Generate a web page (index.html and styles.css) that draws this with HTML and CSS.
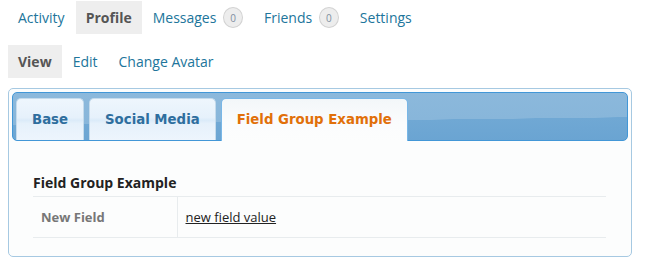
FILE: index.html
```html
<!DOCTYPE html>
<html>
<head>
<meta charset="utf-8">
<link rel="stylesheet" href="styles.css">
</head>
<body>
<nav class="nav nav-main">
  <a class="nav-item" href="#">Activity</a>
  <a class="nav-item is-current" href="#">Profile</a>
  <a class="nav-item" href="#">Messages <span class="badge">0</span></a>
  <a class="nav-item" href="#">Friends <span class="badge">0</span></a>
  <a class="nav-item" href="#">Settings</a>
</nav>
<nav class="nav nav-sub">
  <a class="nav-item is-current" href="#">View</a>
  <a class="nav-item" href="#">Edit</a>
  <a class="nav-item" href="#">Change Avatar</a>
</nav>
<div class="tabs">
  <ul class="tab-bar">
    <li class="tab"><a href="#">Base</a></li>
    <li class="tab"><a href="#">Social Media</a></li>
    <li class="tab is-active"><a href="#">Field Group Example</a></li>
  </ul>
  <div class="tab-panel">
    <h4 class="group-title">Field Group Example</h4>
    <table class="fields">
      <tr>
        <td class="label">New Field</td>
        <td class="value"><a href="#">new field value</a></td>
      </tr>
    </table>
  </div>
</div>
</body>
</html>
```
FILE: styles.css
```css
* { box-sizing: border-box; }
body {
  margin: 0;
  padding: 1px 8px 0;
  background: #fff;
  font-family: "Open Sans", "Liberation Sans", sans-serif;
}
.nav {
  display: flex;
  gap: 1px;
}
.nav-sub { margin-top: 11px; }
.nav-item {
  display: flex;
  align-items: center;
  height: 33px;
  padding: 0 10px;
  font-size: 14px;
  color: #21759b;
  text-decoration: none;
  white-space: pre;
}
.nav-item.is-current {
  background: #eeeeee;
  color: #555;
  font-weight: bold;
}
.badge {
  display: inline-flex;
  align-items: center;
  justify-content: center;
  width: 20px;
  height: 21px;
  margin-left: 3px;
  border: 1px solid #d2d2d2;
  border-radius: 50%;
  background: #ededed;
  color: #7f8fa0;
  font-size: 10px;
  line-height: 1;
}
.tabs {
  margin-top: 10px;
  width: 624px;
  padding: 3px;
  border: 1px solid #a6c9e2;
  border-radius: 5px;
  background: #fcfdfd;
}
.tab-bar {
  display: flex;
  gap: 5px;
  margin: 0;
  padding: 5px 3px 0;
  height: 49px;
  list-style: none;
  border: 1px solid #4297d7;
  border-radius: 5px;
  background: linear-gradient(179.3deg, #8cb9dc 0%, #88b6da 58%, #70a8d4 58.5%, #6aa4d2 100%);
}
.tab {
  height: 42px;
  border: 1px solid #c5dbec;
  border-bottom: none;
  border-radius: 5px 5px 0 0;
  background: linear-gradient(#eef6fd 0%, #e6f1fb 45%, #dbebf9 52%, #e6f1fb 60%, #edf5fd 100%);
}
.tab a {
  display: block;
  padding: 0 15px;
  line-height: 41px;
  font-family: "DejaVu Sans", Verdana, sans-serif;
  font-weight: bold;
  font-size: 13.3px;
  color: #2e6e9e;
  text-decoration: none;
}
.tab.is-active {
  height: 43px;
  border-color: #79b7e7;
  background: linear-gradient(#f3f7f9 0%, #fbfcfd 60%, #fcfdfd 100%);
}
.tab.is-active a { color: #e17009; }
.tab-panel {
  padding: 32px 22px 15px 21px;
}
.group-title {
  margin: 0 0 3px;
  height: 20px;
  line-height: 20px;
  font-size: 14px;
  font-weight: bold;
  color: #222;
}
.fields {
  width: 100%;
  border-collapse: collapse;
  font-size: 13px;
}
.fields td {
  height: 41px;
  padding: 0 8px;
  border-top: 1px solid #e8ecee;
  border-bottom: 1px solid #e8ecee;
}
.fields .label {
  width: 144px;
  border-right: 1px solid #e8ecee;
  font-weight: bold;
  color: #777;
}
.fields .value a {
  color: #222;
  text-decoration: underline;
}
```
